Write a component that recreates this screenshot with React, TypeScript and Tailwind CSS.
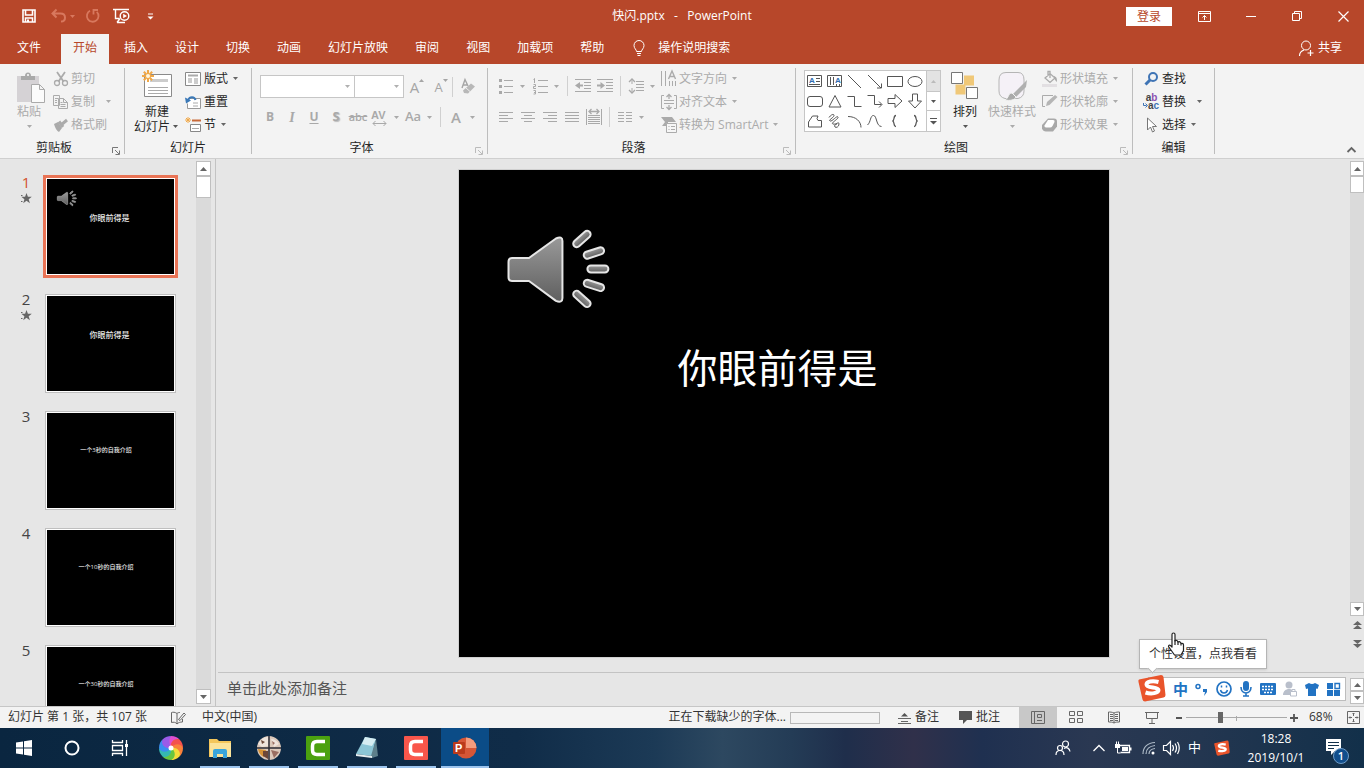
import React from 'react';

type Kids = { children?: React.ReactNode };

function Svg({ w = 16, h = 16, className = '', children }: Kids & { w?: number; h?: number; className?: string }) {
  return (
    <svg
      width={w}
      height={h}
      viewBox={`0 0 ${w} ${h}`}
      fill="none"
      stroke="currentColor"
      className={`shrink-0 overflow-visible ${className}`}
      aria-hidden="true"
    >
      {children}
    </svg>
  );
}

function Caret({ className = '' }: { className?: string }) {
  return (
    <span className={`flex w-[10px] shrink-0 items-center justify-center ${className}`}>
      <svg width="5" height="3" viewBox="0 0 5 3" fill="currentColor" aria-hidden="true">
        <path d="M0 0h5L2.5 3z" />
      </svg>
    </span>
  );
}

function Sep() {
  return <span className="mx-[4px] h-[20px] w-px shrink-0 bg-[#d0d0d0]" />;
}

function Divider() {
  return <div className="my-1 w-px shrink-0 bg-[#bdbdbd]" />;
}

function Group({ label, launcher, launcherDim, width, children }: Kids & { label: string; launcher?: boolean; launcherDim?: boolean; width: string }) {
  return (
    <section className={`flex shrink-0 flex-col justify-between ${width}`} aria-label={label}>
      <div className="flex h-[72px] items-start">{children}</div>
      <div className="flex h-[21px] items-start">
        <span className="flex-1 text-center leading-[22px] text-[#262626]">{label}</span>
        {launcher && (
          <button className={`flex h-[21px] w-4 items-center justify-center pt-[7px] ${launcherDim ? 'text-[#bbb]' : 'text-[#777]'}`} aria-label={`${label}设置`}>
            <Svg w={8} h={8}>
              <path d="M.5 6V.5H6M3 3l4 4M7.500 3.500v4h-4" />
            </Svg>
          </button>
        )}
      </div>
    </section>
  );
}

function Tool({ label, caret, children }: Kids & { label: string; caret?: boolean }) {
  return (
    <button className="flex h-[22px] shrink-0 items-center text-[#a9a9a9]" aria-label={label}>
      <span className="flex w-[22px] items-center justify-center">{children}</span>
      {caret && <Caret />}
    </button>
  );
}

function Row({ icon, text, caret, off, gap }: { icon: React.ReactNode; text: string; caret?: boolean; off?: boolean; gap?: boolean }) {
  return (
    <button className={`flex h-[23px] items-center gap-[2px] whitespace-nowrap ${off ? 'text-[#ababab]' : 'text-[#262626]'}`}>
      {icon}
      <span>{text}</span>
      {caret && <Caret className={`${gap ? 'ml-[6px]' : ''} ${off ? '' : 'text-[#666]'}`} />}
    </button>
  );
}

/* ---------- title bar ---------- */

function TitleBar() {
  return (
    <header className="grid h-8 shrink-0 grid-cols-[1fr_auto_1fr] items-center bg-[#b7472a] text-white">
      <div className="flex items-center pl-[21px]">
        <button aria-label="保存">
          <Svg>
            <path d="M2 2h12v12H2zM4.500 2v5h7V2" strokeWidth="1.600" />
            <path d="M4.500 14v-4h7v4" strokeWidth="1.500" />
            <path d="M6 11.500h2V14H6z" fill="currentColor" stroke="none" />
          </Svg>
        </button>
        <button className="ml-[14px] flex items-center text-[#d8785e]" aria-label="撤消">
          <Svg>
            <path d="M5.500 1.500L1.500 5.500l4 4M2 5.500h7.500c2.800 0 4.500 1.800 4.500 4.200 0 2.300-1.700 3.800-4 3.800" strokeWidth="2" />
          </Svg>
          <Caret />
        </button>
        <button className="ml-[8px] text-[#d8785e]" aria-label="重复">
          <Svg>
            <path d="M5 2.800A5.800 5.800 0 1 0 11.800 3.800" strokeWidth="1.800" />
            <path d="M8.500 6.500V2H13" strokeWidth="1.800" />
          </Svg>
        </button>
        <button className="ml-[12px]" aria-label="从头开始">
          <Svg w={18}>
            <path d="M0 1.500h16M2.500 2v8.500h4M7 10.500l-3 4M4 14.500h8" strokeWidth="1.400" />
            <circle cx="11.500" cy="8" r="4.300" strokeWidth="1.400" />
            <path d="M10.200 5.700v4.600L14 8z" fill="currentColor" stroke="none" />
          </Svg>
        </button>
        <button className="ml-[16px]" aria-label="自定义快速访问工具栏">
          <Svg w={7} h={7}>
            <path d="M1 1h5" />
            <path d="M.5 3.500h6L3.500 6.500z" fill="currentColor" stroke="none" />
          </Svg>
        </button>
      </div>
      <h1 className="whitespace-pre pb-px text-[12px]">快闪.pptx&nbsp;&nbsp; -&nbsp;&nbsp; PowerPoint</h1>
      <div className="flex items-center justify-end pr-[15px]">
        <button className="h-[19px] w-[46px] bg-white text-[12px] leading-[19px] text-[#b7472a]">登录</button>
        <button className="ml-[26px]" aria-label="功能区显示选项">
          <Svg w={13} h={11}>
            <path d="M.5.5h12v10H.5zM.5 2.500h12M6.500 9V4.500M4.500 6.500l2-2 2 2" />
          </Svg>
        </button>
        <button className="ml-[35px]" aria-label="最小化">
          <Svg w={10} h={11}><path d="M0 5.500h10" /></Svg>
        </button>
        <button className="ml-[36px]" aria-label="还原">
          <Svg w={10} h={10}><path d="M.5 2.500h7v7h-7zM2.500 2.500v-2h7v7h-2" /></Svg>
        </button>
        <button className="ml-[36px]" aria-label="关闭">
          <Svg w={11} h={11}><path d="M.5.5l10 10M10.500.5l-10 10" strokeWidth="1.200" /></Svg>
        </button>
      </div>
    </header>
  );
}

const tabs = ['插入', '设计', '切换', '动画', '幻灯片放映', '审阅', '视图', '加载项', '帮助'];

function TabBar() {
  return (
    <nav className="flex h-8 shrink-0 items-end bg-[#b7472a] pl-[5px] text-[12px] text-white">
      <button className="h-[30px] px-3 pb-[2px]">文件</button>
      <button className="ml-[8px] mr-[3px] h-[30px] bg-[#f3f3f3] px-3 pb-[2px] text-[#b7472a]">开始</button>
      <div className="flex gap-[3px]">
        {tabs.map((t) => (
          <button key={t} className="h-[30px] px-3 pb-[2px]">{t}</button>
        ))}
      </div>
      <button className="ml-[16px] flex h-[30px] items-center gap-[12px] pb-[2px]">
        <Svg w={14} h={16}>
          <path d="M4.500 11.500c0-2-2.500-3-2.500-6a5 5 0 0 1 10 0c0 3-2.500 4-2.500 6zM5 13.500h4M5.500 15.500h3" />
        </Svg>
        操作说明搜索
      </button>
      <button className="ml-auto mr-[22px] flex h-[30px] items-center gap-[4px] pb-[2px]">
        <Svg w={16} h={17}>
          <circle cx="8" cy="5.500" r="4.500" />
          <path d="M1.500 16c0-3 1.700-5 4.500-6M12.500 10v6M9.500 13h6" strokeWidth="1.200" />
        </Svg>
        共享
      </button>
    </nav>
  );
}

/* ---------- ribbon ---------- */

function ClipboardGroup() {
  return (
    <Group label="剪贴板" launcher width="w-[124px]">
      <button className="ml-[14px] flex w-[34px] flex-col items-center pt-[8px] text-[#ababab]">
        <Svg w={30} h={31}>
          <path d="M1 4h22v26H1z" fill="#d5d2d5" stroke="none" />
          <path d="M5 8V4h4c0-2 1-3.500 3-3.500S15 2 15 4h4v4z" fill="#a9a9a9" stroke="none" />
          <path d="M15.500 12.500h8l5 5v13h-13zM23.500 12.500v5h5" fill="#fbfbfb" stroke="#aaa" />
          <path d="M11.500 2.500h1v1h-1z" stroke="#fff" />
        </Svg>
        <span className="-ml-[4px] leading-[17px]">粘贴</span>
        <Caret className="-ml-[3px] h-[12px]" />
      </button>
      <div className="ml-[5px] pt-[3px]">
        <Row off text="剪切" icon={
          <Svg><path d="M4 1l6.500 9.500M12 1L5.500 10.500" strokeWidth="1.800" /><circle cx="4" cy="12" r="2.500" strokeWidth="1.300" /><circle cx="12" cy="12" r="2.500" strokeWidth="1.300" /></Svg>
        } />
        <Row off text="复制" caret gap icon={
          <Svg><path d="M.5 1.500h6v10h-6zM5.500 4.500h5l4 4v6h-9zM10.500 4.500v4h4" fill="#f3f3f3" /><path d="M2 4.500h3M2 6.500h2M2 8.500h2M7.500 8.500h2M7.500 10.500h5M7.500 12.500h5" /></Svg>
        } />
        <Row off text="格式刷" icon={
          <Svg><path d="M1 7l4-2 4 6-3 4c-2-1-4-4-5-8z" fill="#aaa" stroke="none" /><path d="M6 4.500l4 5.500M8 8l6-5" strokeWidth="3" /></Svg>
        } />
      </div>
    </Group>
  );
}

function SlidesGroup() {
  return (
    <Group label="幻灯片" width="w-[126px]">
      <button className="ml-[7px] flex w-[50px] flex-col items-center pt-[6px] text-[#262626]">
        <Svg w={32} h={30}>
          <path d="M3.500 4.500h27v22h-27z" fill="#fff" stroke="#8a8a8a" />
          <path d="M9 10.500h18" stroke="#ccc" strokeWidth="3" />
          <path d="M7 17.500h20M7 20.500h20M7 23.500h20" stroke="#aaa" />
          <path d="M7 0v12M1 6h12M2.800 1.800l8.400 8.400M11.200 1.800l-8.400 8.400" stroke="#f0a848" strokeWidth="2" />
          <circle cx="7" cy="6" r="2" fill="#fff7df" stroke="none" />
        </Svg>
        <span className="mt-[4px] leading-[15px]">新建</span>
        <span className="flex w-full items-center whitespace-nowrap pl-[2px] leading-[15px]">幻灯片<Caret className="text-[#555]" /></span>
      </button>
      <div className="ml-[3px] pt-[3px]">
        <Row text="版式" caret icon={
          <Svg w={17}><path d="M.5 1.500h15v13H.5z" fill="#fff" stroke="#888" /><path d="M3 4.500h10" stroke="#aaa" strokeWidth="2" /><path d="M3 7h4v5H3z" fill="#ccc" stroke="none" /><path d="M9 8h4M9 10h4M9 12h4" stroke="#999" /></Svg>
        } />
        <Row text="重置" icon={
          <Svg w={17}><path d="M4.500 4.500h11v10h-13v-5" fill="#fff" stroke="#999" /><path d="M8 9h5M8 12h5" stroke="#aaa" /><path d="M10.500 6C9.500 2.500 5 2 3 6" stroke="#3b79b7" strokeWidth="2" /><path d="M0 3.500l1 6 5-3z" fill="#3b79b7" stroke="none" /></Svg>
        } />
        <Row text="节" caret icon={
          <Svg w={17}><path d="M3 0v6M0 3h6M1 1l4 4M5 1L1 5" stroke="#f0a848" /><path d="M7 3.500h9" stroke="#c86a3a" strokeWidth="2" /><path d="M5.500 7.500h10v7h-10z" fill="#fff" stroke="#888" /><path d="M7 11.500h7" stroke="#aaa" /></Svg>
        } />
      </div>
    </Group>
  );
}

function Combo({ label, width }: { label: string; width: string }) {
  return (
    <div className={`relative h-[23px] ${width}`}>
      <select aria-label={label} defaultValue="" className="h-full w-full appearance-none border border-[#c6c6c6] bg-white">
        <option value="" />
      </select>
      <Caret className="pointer-events-none absolute right-[3px] top-[10px] text-[#b0b0b0]" />
    </div>
  );
}

function FontGroup() {
  return (
    <Group label="字体" launcher launcherDim width="w-[235px]">
      <div className="flex flex-col gap-[8px] pl-[7px] pt-[11px] text-[#a5a5a5]">
        <div className="flex items-center">
          <div className="flex pl-px">
            <Combo label="字体" width="w-[95px]" />
            <div className="-ml-px"><Combo label="字号" width="w-[50px]" /></div>
          </div>
          <button aria-label="增大字号" className="flex w-[26px] justify-center text-[15px] leading-[22px]">
            <span>A</span><Svg w={5} h={4} className="mt-[3px]"><path d="M0 3l2.500-3L5 3z" fill="currentColor" stroke="none" /></Svg>
          </button>
          <button aria-label="减小字号" className="flex w-[22px] justify-center text-[13px] leading-[22px]">
            <span>A</span><Svg w={5} h={4} className="mt-[3px]"><path d="M0 0h5L2.500 3z" fill="currentColor" stroke="none" /></Svg>
          </button>
          <span className="h-[20px] w-px bg-[#d0d0d0]" />
          <button aria-label="清除所有格式" className="ml-[7px]">
            <Svg w={18}>
              <path d="M2 9L5 .5 8 7M3 6h4" strokeWidth="1.400" />
              <path d="M3 11.500l8-7 4 3-7 7-4-.5z" fill="#b8b8b8" stroke="none" />
              <path d="M6 9l4 3.500" stroke="#eee" />
            </Svg>
          </button>
        </div>
        <div className="flex items-center">
          <Tool label="加粗"><b className="text-[12px]">B</b></Tool>
          <Tool label="倾斜"><i className="font-['Liberation_Serif',serif] text-[14px] font-bold">I</i></Tool>
          <Tool label="下划线"><b className="text-[12px] underline underline-offset-2">U</b></Tool>
          <Tool label="文字阴影"><b className="text-[13px] [text-shadow:1px_1px_1px_#bbb]">S</b></Tool>
          <Tool label="删除线"><span className="text-[11px] font-semibold line-through">abc</span></Tool>
          <Tool label="字符间距" caret>
            <Svg w={18} h={18}>
              <text x="0" y="11" fontSize="11" fill="currentColor" stroke="none" className="font-['Liberation_Sans',sans-serif] font-bold">AV</text>
              <path d="M2 15.500h13M4.500 13L2 15.500 4.500 18M12.500 13l2.500 2.500-2.500 2.500" />
            </Svg>
          </Tool>
          <span className="ml-px"><Tool label="更改大小写" caret><span className="text-[13px] font-semibold">Aa</span></Tool></span>
          <span className="ml-[6px] mr-[4px] h-[20px] w-px bg-[#d0d0d0]" />
          <Tool label="字体颜色" caret><span className="text-[15px] font-semibold">A</span></Tool>
        </div>
      </div>
    </Group>
  );
}

function ParagraphGroup() {
  return (
    <Group label="段落" launcher launcherDim width="w-[307px]">
      <div className="flex flex-col gap-[9px] pl-[7px] pt-[11px]">
        <div className="flex items-center">
          <Tool label="项目符号" caret>
            <Svg w={14}><path d="M5 2.500h9M5 8.500h9M5 14.500h9" /><path d="M0 1h3v3H0zM0 7h3v3H0zM0 13h3v3H0z" fill="currentColor" stroke="none" /></Svg>
          </Tool>
          <span className="ml-[2px]">
            <Tool label="编号" caret>
              <Svg w={15}>
                <path d="M5 2.500h10M5 8.500h10M5 14.500h10" />
                <path d="M.5 1.500l1-1V5M.5 6.500h2v2h-2v2h2.500M.5 12.500h2v3.500h-2M1 14.500h1.500" />
              </Svg>
            </Tool>
          </span>
          <span className="ml-[6px] mr-[4px] h-[20px] w-px bg-[#d0d0d0]" />
          <Tool label="减少缩进"><Svg><path d="M0 1.500h16M9 4.500h7M9 7.500h7M9 10.500h7M0 13.500h16" /><path d="M2 7.500h6" strokeWidth="2" /><path d="M0 7.500L5 4v7z" fill="currentColor" stroke="none" /></Svg></Tool>
          <Tool label="增加缩进"><Svg><path d="M0 1.500h16M9 4.500h7M9 7.500h7M9 10.500h7M0 13.500h16" /><path d="M0 7.500h6" strokeWidth="2" /><path d="M8 7.500L3.500 4v7z" fill="currentColor" stroke="none" /></Svg></Tool>
          <Sep />
          <Tool label="行距" caret>
            <Svg w={15}><path d="M7 3.500h8M7 6.500h8M7 9.500h8M7 12.500h8M3 1v5M3 10v5" /><path d="M0 4L3 1l3 3M0 12l3 3 3-3" strokeWidth="1.300" /></Svg>
          </Tool>
        </div>
        <div className="flex items-center">
          <Tool label="左对齐"><Svg w={14} h={12}><path d="M0 1.500h14M0 4.500h9M0 7.500h14M0 10.500h9" /></Svg></Tool>
          <Tool label="居中"><Svg w={14} h={12}><path d="M0 1.500h14M3 4.500h8M0 7.500h14M3 10.500h8" /></Svg></Tool>
          <Tool label="右对齐"><Svg w={14} h={12}><path d="M0 1.500h14M5 4.500h9M0 7.500h14M5 10.500h9" /></Svg></Tool>
          <Tool label="两端对齐"><Svg w={14} h={12}><path d="M0 1.500h14M0 4.500h14M0 7.500h14M0 10.500h14" /></Svg></Tool>
          <Tool label="分散对齐"><Svg><path d="M.5 0v16M15.500 0v16M2 6.500h12M2 8.500h12M2 10.500h12M2 12.500h12M2 14.500h12" /><path d="M3 2.500h10M5.500 0L3 2.500 5.500 5M10.500 0L13 2.500 10.500 5" strokeWidth="1.300" /></Svg></Tool>
          <Sep />
          <Tool label="分栏" caret><Svg w={14} h={12}><path d="M0 1.500h6M8 1.500h6M0 4.500h6M8 4.500h6M0 7.500h6M8 7.500h6M0 10.500h6M8 10.500h6" /></Svg></Tool>
        </div>
      </div>
      <div className="ml-[4px] pt-[3px]">
        <Row off caret text="文字方向" icon={
          <Svg><path d="M.5 0v15M4.500 0v15M8.500 10v5M11.500 10v5M14.500 10v5" /><path d="M7.500 8L11 0l3.500 8M9 5.500h4.500" strokeWidth="1.400" /></Svg>
        } />
        <Row off caret text="对齐文本" icon={
          <Svg><path d="M3 1.500H.5v13H3M13 1.500h2.500v13H13M3 6.500h10M3 9.500h10" /><path d="M8 1v4M8 11v4M5.500 3L8 .5 10.500 3M5.500 13L8 15.500l2.500-2.500" strokeWidth="1.300" /></Svg>
        } />
        <Row off caret text="转换为 SmartArt" icon={
          <Svg><path d="M0 0h11l4 5H7v4H1l3-4z" fill="#aaa" stroke="none" /><path d="M5.500 6.500h10v9h-10z" fill="#f6f6f6" /><path d="M7.500 9.500h1M10 9.500h4M7.500 12.500h1M10 12.500h4" /></Svg>
        } />
      </div>
    </Group>
  );
}

const shapes: { name: string; draw: React.ReactNode }[] = [
  { name: '文本框', draw: <><path d="M.5 2.500h14v11H.5z" /><text x="2" y="10" fontSize="8" fill="#2f6db0" stroke="none" className="font-['Liberation_Sans',sans-serif] font-bold">A</text><path d="M9 5.500h4M9 8.500h4M2 11.500h11" /></> },
  { name: '竖排文本框', draw: <><path d="M.5 2.500h14v11H.5zM3.500 4v8M6.500 4v8" /><text x="8" y="10" fontSize="8" fill="#2f6db0" stroke="none" className="font-['Liberation_Sans',sans-serif] font-bold">A</text><path d="M9.500 11v2M12.500 11v2" /></> },
  { name: '直线', draw: <path d="M1 2l13 13" /> },
  { name: '箭头', draw: <path d="M1 2l13 13M14.500 10.500v4.500H10" /> },
  { name: '矩形', draw: <path d="M.5 3.500h15v10H.5z" /> },
  { name: '椭圆', draw: <ellipse cx="8" cy="8.500" rx="7" ry="5" /> },
  { name: '圆角矩形', draw: <rect x=".5" y="3.500" width="15" height="10" rx="2.500" /> },
  { name: '三角形', draw: <path d="M8 2.500L14 14H2z" /> },
  { name: '肘形连接符', draw: <path d="M.5 3.500h7v10h7" /> },
  { name: '肘形箭头', draw: <path d="M.5 2.500h7v9h7M12 8.500l3 3-3 3" /> },
  { name: '右箭头', draw: <path d="M1 5.500h7v-4l7 6.500-7 6.500v-4H1z" /> },
  { name: '下箭头', draw: <path d="M5.500 1v7H1.500L8 15l6.500-7h-4V1z" /> },
  { name: '任意多边形', draw: <path d="M1.500 14V9l4-6H11q-2 3 0 4.500h3.500V14z" strokeLinejoin="round" /> },
  { name: '自由曲线', draw: <path d="M2 4.500c2-3 5-4 5-2S1 7 3 8s7-6 8-4-8 6-5 7 6-3 6 0-3 4-4 3 0-3 2-3" /> },
  { name: '弧形', draw: <path d="M1 3.500c8 0 13 5 13 11" /> },
  { name: '曲线', draw: <path d="M.5 12C4 9 3 2.500 6.500 2.500S9 13.500 14.500 13.500" /> },
  { name: '左大括号', draw: <path d="M9 2.500c-3 0-1 5-3.500 5.500 2.500.5.5 5.500 3.500 5.500" strokeWidth="1.300" /> },
  { name: '右大括号', draw: <path d="M7 2.500c3 0 1 5 3.500 5.500-2.500.5-.5 5.500-3.500 5.500" strokeWidth="1.300" /> },
];

function DrawingGroup() {
  return (
    <Group label="绘图" launcher launcherDim width="w-[336px]">
      <div className="ml-[8px] mt-[6px] flex shrink-0 border border-[#c6c6c6] bg-white text-[#555]">
        <div className="mr-px grid grid-cols-6">
          {shapes.map((s) => (
            <button key={s.name} aria-label={s.name} className="flex h-5 w-5 items-center justify-center"><Svg>{s.draw}</Svg></button>
          ))}
        </div>
        <div className="flex w-[14px] flex-col border-l border-[#c6c6c6]">
          <button aria-label="上一行" className="flex h-5 items-center justify-center bg-[#e3e3e3] text-[#bbb]"><Svg w={5} h={3}><path d="M0 3h5L2.500 0z" fill="currentColor" stroke="none" /></Svg></button>
          <button aria-label="下一行" className="flex h-5 items-center justify-center border-y border-[#c6c6c6]"><Caret /></button>
          <button aria-label="其他形状" className="flex h-5 items-center justify-center"><Svg w={7} h={7}><path d="M0 .5h7" /><path d="M0 3h7L3.500 6.500z" fill="currentColor" stroke="none" /></Svg></button>
        </div>
      </div>
      <button className="ml-[5px] flex w-[38px] flex-col items-center pt-[7px] text-[#262626]">
        <Svg w={28} h={29}>
          <path d="M13 4.500h10v10H13zM4.500 13.500h10v10h-10z" fill="#f0c878" stroke="none" />
          <path d="M.5 1.500h11v11H.5zM15.500 16.500h11v11h-11z" fill="#fff" stroke="#777" />
        </Svg>
        <span className="mt-[3px] leading-[17px]">排列</span>
        <Caret className="h-[12px] text-[#555]" />
      </button>
      <button className="ml-[2px] flex w-[52px] flex-col items-center whitespace-nowrap pt-[7px] text-[#ababab]">
        <Svg w={30} h={31}>
          <path d="M8 27.500Q2 26 2 20V9q0-7.500 7-7.500h12q6 0 6 7.500v11q0 6-6 7.500z" fill="#f5f1f7" stroke="#b5b5b5" />
          <path d="M30 9l-1 7-10 10-3-3z" fill="#b0b0b0" stroke="none" />
          <path d="M15 22c-4 0-3 5-7 7 5 1 10 0 11-3z" fill="#aaa" stroke="#f3f3f3" />
        </Svg>
        <span className="mt-px leading-[17px]">快速样式</span>
        <Caret className="h-[12px]" />
      </button>
      <div className="ml-[4px] pt-[3px]">
        <Row off caret text="形状填充" icon={
          <Svg><path d="M3 7l5-4.500L13 7l-5 4.500zM6 5V.5h2V7" strokeWidth="1.300" /><path d="M12 5c3 1 3 3 3 6-2-1-2-3-3-4z" fill="#aaa" stroke="none" /><path d="M0 13h15v3H0z" fill="#e2dfe2" stroke="none" /></Svg>
        } />
        <Row off caret text="形状轮廓" icon={
          <Svg><path d="M11 1.500H.5v11H3" /><path d="M4 12l1-4 8-7 2.500 2-8 8z" fill="#b5b5b5" stroke="none" /></Svg>
        } />
        <Row off caret text="形状效果" icon={
          <Svg><path d="M6 1.500h6q3 0 3 3v5l-4 5H4q-3 0-4-3V8z" fill="#a9a9a9" stroke="none" /><path d="M6 3h5q2 0 1.500 2L10.500 9q-1 1.500-2.500 1.500H4Q2 10.500 2.500 8.500z" fill="#fff" stroke="none" /></Svg>
        } />
      </div>
    </Group>
  );
}

function EditGroup() {
  return (
    <Group label="编辑" width="w-[81px]">
      <div className="pl-[10px] pt-[3px]">
        <Row text="查找" icon={<Svg w={17}><circle cx="10" cy="6" r="4" stroke="#3f74b5" strokeWidth="2" /><path d="M7 9l-4.500 4.500" stroke="#3f74b5" strokeWidth="3" /></Svg>} />
        <Row text="替换" caret gap icon={
          <span className="flex w-[17px] flex-col font-['Liberation_Sans',sans-serif] text-[10px] font-bold leading-[8px] text-[#444]">
            <span>a<span className="text-[#8b4fb0]">b</span></span>
            <span className="flex items-center"><Svg w={5} h={5}><path d="M.5 0v2.500h3M2.500.5l2 2-2 2" stroke="#3f74b5" /></Svg>a<span className="text-[#3f74b5]">c</span></span>
          </span>
        } />
        <Row text="选择" caret icon={<Svg w={17}><path d="M4.500 1v12l3-3 2 5 2-1-2-4.500h4z" fill="#fff" stroke="#777" /></Svg>} />
      </div>
    </Group>
  );
}

function Ribbon() {
  return (
    <div className="flex h-[95px] shrink-0 border-b border-[#cfcfcf] bg-[#f3f3f3] text-[12px]">
      <ClipboardGroup /><Divider />
      <SlidesGroup /><Divider />
      <FontGroup /><Divider />
      <ParagraphGroup /><Divider />
      <DrawingGroup /><Divider />
      <EditGroup /><Divider />
      <button aria-label="折叠功能区" className="ml-auto mr-[8px] self-end pb-[5px] text-[#666]">
        <Svg w={9} h={6}><path d="M.5 5l4-4 4 4" strokeWidth="1.800" /></Svg>
      </button>
    </div>
  );
}

/* ---------- slides ---------- */

function Speaker({ className }: { className: string }) {
  return (
    <svg viewBox="0 0 104 78" className={`overflow-visible ${className}`} fill="url(#spk)" stroke="#e6e6e6" strokeWidth="2" strokeLinejoin="round" aria-label="音频" role="img">
      <defs>
        <linearGradient id="spk" x1="0" y1="0" x2="0" y2="1">
          <stop offset="0" stopColor="#999" />
          <stop offset="1" stopColor="#5f5f5f" />
        </linearGradient>
      </defs>
      <path d="M5 27h17L49 7.500Q55.500 4.500 55.500 10v57q0 5.500-6.500 3L22 50H5q-3.500 0-3.500-4V31q0-4 3.500-4z" />
      {[[75, 8, -42], [87, 22, -18], [91, 38, 0], [87, 54.500, 18], [75, 68, 42]].map(([x, y, r]) => (
        <rect key={y} x={x - 10.500} y={y - 3.500} width="21" height="7" rx="3.500" transform={`rotate(${r} ${x} ${y})`} />
      ))}
    </svg>
  );
}

const slides = [
  { n: 1, text: '你眼前得是', star: true },
  { n: 2, text: '你眼前得是', star: true },
  { n: 3, text: '一个3秒的自我介绍' },
  { n: 4, text: '一个10秒的自我介绍' },
  { n: 5, text: '一个30秒的自我介绍' },
];

function ArrowBtn({ up, label, cls }: { up?: boolean; label: string; cls: string }) {
  return (
    <button aria-label={label} className={`flex shrink-0 items-center justify-center border border-[#bfbfbf] bg-white text-[#666] ${cls}`}>
      <Svg w={7} h={4}><path d={up ? 'M0 4h7L3.500 0z' : 'M0 0h7L3.500 4z'} fill="currentColor" stroke="none" /></Svg>
    </button>
  );
}

function SlidePanel() {
  return (
    <aside className="flex w-[216px] shrink-0 border-r border-[#c3c3c3]">
      <ol className="min-w-0 flex-1 overflow-hidden pt-[19px]">
        {slides.map((s) => (
          <li key={s.n} className="flex h-[117px] items-start">
            <div className={`-mt-[4px] flex w-[46px] shrink-0 flex-col items-center pl-[6px] text-[15px] leading-[16px] ${s.n === 1 ? 'text-[#d35230]' : 'text-[#444]'}`}>
              <span>{s.n}</span>
              {s.star && (
                <Svg w={12} h={11} className="mt-[3px] text-[#666]">
                  <path d="M6.500 0l1.400 3.800h3.900L8.700 6.200l1.200 4-3.400-2.400-3.300 2.400 1.200-4L1.300 3.800h3.800z" fill="currentColor" stroke="none" />
                  <path d="M1 2.500h1.500M1 8.500h1.500" />
                </Svg>
              )}
            </div>
            <button
              aria-label={`幻灯片 ${s.n}`}
              className={`relative flex h-[97px] w-[129px] shrink-0 justify-center border border-white bg-black text-[#e8e8e8] ${s.n === 1 ? 'ring-3 ring-[#e97456]' : 'ring-1 ring-[#bfbfbf]'}`}
            >
              {s.n === 1 && <Speaker className="absolute left-[10px] top-[12px] w-5" />}
              <span className={s.star ? 'mr-[2px] mt-[34px] text-[8px] font-medium leading-[10px]' : 'mr-[9px] mt-[33px] text-[6px] font-medium leading-[8px]'}>{s.text}</span>
            </button>
          </li>
        ))}
      </ol>
      <div className="mb-[2px] mr-[4px] mt-[2px] flex w-[15px] flex-col bg-[#dadada]">
        <ArrowBtn up label="向上滚动" cls="h-[15px]" />
        <div className="h-[22px] border border-[#bfbfbf] bg-white" />
        <div className="flex-1" />
        <ArrowBtn label="向下滚动" cls="h-[15px]" />
      </div>
    </aside>
  );
}

function DoubleArrow({ up, label }: { up?: boolean; label: string }) {
  return (
    <button aria-label={label} className="flex h-[18px] items-center justify-center text-[#666]">
      <Svg w={9} h={9}>
        <path d={up ? 'M0 4h9L4.500 0zM0 8h9L4.500 4z' : 'M0 1h9L4.500 5zM0 5h9L4.500 9z'} fill="currentColor" stroke="none" />
      </Svg>
    </button>
  );
}

function Editor() {
  return (
    <div className="flex min-w-0 flex-1 flex-col">
      <div className="flex min-h-0 flex-1">
        <div className="flex min-w-0 flex-1 justify-center pb-[15px] pl-[2px] pt-[11px]">
          <div className="relative aspect-[4/3] h-full bg-black ring-1 ring-[#d0d0d0]">
            <Speaker className="absolute left-[7.400%] top-[12.500%] w-[16%]" />
            <p className="absolute inset-x-0 top-[35%] mr-[13px] text-center text-[40px] leading-[56px] text-white">你眼前得是</p>
          </div>
        </div>
        <div className="mt-[2px] flex w-[14px] shrink-0 flex-col">
          <ArrowBtn up label="上滚" cls="h-[15px]" />
          <div className="h-[17px] border border-[#bfbfbf] bg-white" />
          <div className="flex-1 bg-[#dadada]" />
          <ArrowBtn label="下滚" cls="h-[14px]" />
          <DoubleArrow up label="上一张幻灯片" />
          <DoubleArrow label="下一张幻灯片" />
          <div className="h-[20px]" />
        </div>
      </div>
      <div className="ml-[2px] flex h-[34px] shrink-0 border-t border-[#c3c3c3]">
        <textarea aria-label="备注" rows={1} placeholder="单击此处添加备注" className="h-full min-w-0 flex-1 resize-none overflow-hidden bg-transparent pl-[9px] pt-[3px] text-[15px] leading-[24px] placeholder:text-[#555]" />
        <div className="flex w-[14px] flex-col pt-[5px]">
          <ArrowBtn up label="备注上滚" cls="h-[13px]" />
          <ArrowBtn label="备注下滚" cls="h-[13px]" />
        </div>
      </div>
    </div>
  );
}

/* ---------- input method bar ---------- */

function SogouLogo({ className }: { className: string }) {
  return (
    <svg viewBox="0 0 28 28" className={className} aria-hidden="true">
      <path d="M1 5.500L23 1q2 0 2.500 2l2 18q0 2-2 2.500L7 27.500q-2 0-2.500-2L.5 8q-.5-2 .5-2.500z" fill="#e9542b" />
      <path d="M20.500 8c-6-1.500-12-.5-12 2.500 0 4 12 2 12 5.500 0 3-7 4.500-13 2.500" fill="none" stroke="#fff" strokeWidth="4" />
    </svg>
  );
}

function ImeBar() {
  return (
    <div className="absolute bottom-[67px] right-[18px] flex w-[207px] flex-col text-[12px]">
      <div className="relative mb-[8px] h-[30px] w-[128px] border border-[#b5b5b5] bg-white pl-[9px] leading-[28px] text-[#333] shadow-sm">
        个性设置，点我看看
        <span className="absolute -bottom-[4px] left-[9px] h-[7px] w-[7px] rotate-45 border-b border-r border-[#b5b5b5] bg-white" />
        <svg className="absolute -top-[8px] left-[27px] h-[26px] w-[18px]" viewBox="0 0 18 26" fill="#fff" stroke="#222" strokeWidth="1.200" strokeLinejoin="round" aria-hidden="true">
          <path d="M5 15V2.500q0-1.500 1.500-1.500T8 2.500V9q.5-1 2-.500l1 1.500q1.500-1 2.500.5l.5 1q2.500-.5 2.500 1.500v5.500L14 23H7.500L1.500 14.500q0-2 2-1z" />
          <path d="M8 8v5M11 10v3M14 11.500v2" />
        </svg>
      </div>
      <div className="relative ml-[9px] flex h-[24px] items-center justify-end gap-[6px] border border-[#bdbdbd] bg-white pr-[4px] text-[#2273c3]">
        <SogouLogo className="absolute -left-[11px] -top-[4px] h-[28px] w-[28px]" />
        <button className="text-[15px] font-bold leading-[22px]">中</button>
        <button aria-label="中文标点"><Svg><circle cx="4" cy="5.500" r="2" strokeWidth="1.500" /><path d="M9 8h4v3l-3 4 1-4H9z" fill="currentColor" stroke="none" /></Svg></button>
        <button aria-label="表情"><Svg><circle cx="8" cy="8" r="7" strokeWidth="1.700" /><path d="M4.500 9c1 4 6 4 7 0M5.500 4.500v2M10.500 4.500v2" strokeWidth="1.500" /></Svg></button>
        <button aria-label="语音"><Svg><rect x="5" y="0" width="6" height="10" rx="3" fill="currentColor" stroke="none" /><path d="M3 6c0 8 10 8 10 0M8 12v3M5 15h6" strokeWidth="1.600" /></Svg></button>
        <button aria-label="软键盘"><Svg><rect x="0" y="2" width="16" height="12" rx="1" fill="currentColor" stroke="none" /><path d="M2 5.500h12M2 8.500h12M4 11.500h8" stroke="#fff" strokeDasharray="2 1" strokeWidth="1.500" /></Svg></button>
        <button aria-label="用户" className="text-[#b9bfcb]"><Svg><circle cx="7" cy="4" r="3.500" fill="currentColor" stroke="none" /><path d="M1 14c0-8 12-8 12 0z" fill="currentColor" stroke="none" /><path d="M8.500 10.500h6v4.500h-6zM10 10V8.500h3V10" fill="#fff" /></Svg></button>
        <button aria-label="皮肤"><Svg><path d="M5 2q3 2 6 0l4 2-1.500 4L12 7.500V15H4V7.500L2 8 1 4z" fill="currentColor" stroke="none" /></Svg></button>
        <button aria-label="工具箱"><Svg w={15}><path d="M1 2h6v6H1zM1 9h6v6H1zM8 9h6v6H8z" fill="currentColor" stroke="none" /><path d="M9 2.500h4.500v5H9z" strokeWidth="1.400" /></Svg></button>
      </div>
    </div>
  );
}

/* ---------- status bar ---------- */

function StatusBar() {
  return (
    <footer className="flex h-[22px] shrink-0 items-center whitespace-nowrap border-t border-[#c6c6c6] bg-[#f3f3f3] pl-[8px] pr-[4px] text-[12px] text-[#333]">
      <span className="w-[162px] pb-px">幻灯片 第 1 张，共 107 张</span>
      <button aria-label="拼写检查" className="w-[32px] text-[#666]">
        <Svg><path d="M7 3.500C5 2 3 2 1.500 2.500v10c2-.500 4-.5 5.500 1.500 1.500-1.500 3-2 5.500-2V9M7 3.500V14M7 3.500c1-1 2-1 3-1" /><path d="M8.500 9.500L14 3l1.500 1.500-5.500 6z" /></Svg>
      </button>
      <button className="pb-px">中文(中国)</button>
      <div className="ml-auto flex items-center">
        <span className="pb-px">正在下载缺少的字体...</span>
        <div role="progressbar" aria-label="下载进度" className="ml-[4px] h-[12px] w-[90px] border border-[#b8b8b8]" />
        <button className="ml-[18px] flex items-center gap-[4px]">
          <Svg w={13} h={12}><path d="M0 6.500h13M3 9.500h7M0 11.500h13" stroke="#666" /><path d="M3 4.500L6.500 1 10 4.500z" fill="#555" stroke="none" /></Svg>
          <span className="pb-px">备注</span>
        </button>
        <button className="ml-[20px] flex items-center gap-[3px]">
          <Svg w={14} h={13}><path d="M0 0h13v9H8l-4 4V9H0z" fill="#555" stroke="none" /></Svg>
          <span className="pb-px">批注</span>
        </button>
        <div className="ml-[19px] flex text-[#666]">
          <button aria-label="普通视图" className="flex h-[21px] w-[38px] items-center justify-center bg-[#c8c8c8]"><Svg w={14} h={13}><path d="M.5.5h13v12H.5zM3.500 1v11M6.500 3.500h4v3h-4zM6 9.500h5" /></Svg></button>
          <button aria-label="幻灯片浏览" className="flex h-[21px] w-[38px] items-center justify-center"><Svg w={14} h={13}><path d="M.5.5h5v4h-5zM8.500.5h5v4h-5zM.5 7.500h5v4h-5zM8.500 7.500h5v4h-5z" /></Svg></button>
          <button aria-label="阅读视图" className="flex h-[21px] w-[38px] items-center justify-center"><Svg w={14} h={13}><path d="M7 2C5 1 3 1 1.500 1v10c2 0 4 0 5.500 1 1.500-1 3.500-1 5.500-1V1C11 1 9 1 7 2zM7 2v10M3 3.500h3M3 5.500h3M3 7.500h3M3 9.500h3M8 3.500h3M8 5.500h3M8 7.500h3M8 9.500h3" /></Svg></button>
          <button aria-label="幻灯片放映" className="flex h-[21px] w-[38px] items-center justify-center"><Svg w={14} h={13}><path d="M0 1.500h14M1.500 2v5.500h11V2M7 8v4M4 12.500h6" /></Svg></button>
        </div>
        <button aria-label="缩小" className="ml-[4px] text-[#555]"><Svg w={8} h={8}><path d="M1 4h6" strokeWidth="2" /></Svg></button>
        <div className="relative ml-[3px] flex h-[14px] items-center">
          <span className="absolute left-[50px] top-[5px] h-[5px] w-px bg-[#aaa]" />
          <input
            type="range"
            aria-label="显示比例"
            min={0}
            max={100}
            defaultValue={33}
            className="relative h-[12px] w-[101px] appearance-none bg-[linear-gradient(#a9a9a9,#a9a9a9)] bg-[length:100%_1px] bg-center bg-no-repeat [&::-webkit-slider-thumb]:h-[11px] [&::-webkit-slider-thumb]:w-[5px] [&::-webkit-slider-thumb]:appearance-none [&::-webkit-slider-thumb]:bg-[#666]"
          />
        </div>
        <button aria-label="放大" className="ml-[3px] text-[#555]"><Svg w={8} h={8}><path d="M0 4h8M4 0v8" strokeWidth="1.800" /></Svg></button>
        <span className="ml-[11px] w-[38px] pb-px">68%</span>
        <button aria-label="适应窗口" className="text-[#666]"><Svg w={13} h={13}><path d="M.5.5h12v12H.5z" /><path d="M6.500 2v3M6.500 8v3M2 6.500h3M8 6.500h3M5.500 3l1-1 1 1M5.500 10l1 1 1-1M3 5.500l-1 1 1 1M10 5.500l1 1-1 1" /></Svg></button>
      </div>
    </footer>
  );
}

/* ---------- taskbar ---------- */

const petals = ['#e04fd0', '#f4524d', '#f9813a', '#f4dc3a', '#69c63f', '#35b9b0', '#3a8df0', '#9a5be8'];

const apps: { name: string; icon: React.ReactNode; open: boolean; active?: boolean }[] = [
  {
    name: '浏览器', open: false, icon: (
      <Svg w={24} h={24}>
        {petals.map((c, i) => (
          <path key={c} d="M12 12C7 9 7 2 12 0c4 0 6.500 1.500 8.500 3.500C17 4 14 7 12 12z" fill={c} stroke="none" transform={`rotate(${i * 45} 12 12)`} />
        ))}
        <circle cx="12" cy="12" r="2.500" fill="#fff" stroke="none" />
      </Svg>
    ),
  },
  {
    name: '文件资源管理器', open: true, icon: (
      <Svg w={22} h={20}><path d="M0 1h8l2 2h12v16H0z" fill="#f3c65b" stroke="none" /><path d="M1 5h21v14H1z" fill="#fbe39a" stroke="none" /><path d="M4 20v-7q0-2 2-2h10q2 0 2 2v7h-4v-4H8v4z" fill="#39a5dc" stroke="none" /></Svg>
    ),
  },
  {
    name: '图片', open: true, icon: (
      <Svg w={24} h={24}>
        <circle cx="12" cy="12" r="12" fill="#dcc9bb" stroke="none" />
        <path d="M1 8q5-8 10-7v9l-6 1zM14 3q5 0 8 5l-5 3z" fill="#efe4dc" stroke="none" />
        <path d="M1 13l8 1-2 7q-5-2-6-8z" fill="#d69336" stroke="none" />
        <path d="M6 15h5v8l-5-3zM4 4l4 2-3 2z" fill="#6e4838" stroke="none" />
        <path d="M14 14l8 2-5 6zM15 5l3 2-2 2z" fill="#9a6e62" stroke="none" />
        <path d="M12 0v24M0 12h24" stroke="#2a2a35" strokeWidth="1.500" />
      </Svg>
    ),
  },
  {
    name: 'Camtasia', open: true, icon: (
      <Svg w={24} h={24}><rect width="24" height="24" rx="1" fill="#4ba10f" stroke="none" /><path d="M19 5.500h-8Q6.500 5.500 6.500 10v4q0 4.500 4.500 4.500h8" stroke="#fff" strokeWidth="3.500" /></Svg>
    ),
  },
  {
    name: '记事本', open: true, icon: (
      <Svg w={24} h={24}><path d="M10 1l11 2-4 17-16-2z" fill="#8cc6d6" stroke="none" /><path d="M21 3l2 17-6 2-1-2z" fill="#5d7f8b" stroke="none" /><path d="M1 18l16 2v2L1 20z" fill="#e6eef0" stroke="none" /><path d="M10 1l11 2-4 7-10-2z" fill="#d6edf2" stroke="none" /></Svg>
    ),
  },
  {
    name: 'Camtasia 录制', open: true, icon: (
      <Svg w={24} h={24}><rect width="24" height="24" rx="1" fill="#f9564b" stroke="none" /><path d="M19 5.500h-8Q6.500 5.500 6.500 10v4q0 4.500 4.500 4.500h8" stroke="#fff" strokeWidth="3.500" /></Svg>
    ),
  },
  {
    name: 'PowerPoint', open: true, active: true, icon: (
      <Svg w={24} h={22}>
        <circle cx="13" cy="11" r="10.500" fill="#d65636" stroke="none" /><path d="M13 .5a10.500 10.500 0 0 1 10.500 10.500H13z" fill="#f39b7d" stroke="none" />
        <rect x="0" y="5" width="12" height="12" rx="1" fill="#bb3b1c" stroke="none" />
        <text x="2" y="15" fontSize="11" fill="#fff" stroke="none" className="font-['Liberation_Sans',sans-serif] font-bold">P</text>
      </Svg>
    ),
  },
];

function Taskbar() {
  return (
    <footer className="flex h-10 shrink-0 bg-[linear-gradient(90deg,#0a2640_0%,#102c48_38%,#1c3a56_48%,#2d4860_53%,#243c56_58%,#1f2e4b_62%,#30304a_67%,#1f3050_72%,#2a3852_80%,#233650_88%,#12304a_100%)] text-[12px] text-white">
      <button aria-label="开始" className="flex w-12 items-center justify-center">
        <Svg><path d="M0 2.500l7-1v6H0zM8 1.300L16 0v7.500H8zM0 8.500h7v6l-7-1zM8 8.500h8V16l-8-1.300z" fill="currentColor" stroke="none" /></Svg>
      </button>
      <button aria-label="Cortana" className="flex w-12 items-center justify-center"><Svg><circle cx="8" cy="8" r="6.500" strokeWidth="2" /></Svg></button>
      <button aria-label="任务视图" className="flex w-12 items-center justify-center"><Svg><path d="M.5 0v2.500h10V0M.5 16v-2.500h10V16M.5 5.500h10v5H.5zM14.500 0v16" strokeWidth="1.300" /><path d="M13 4h3v3h-3z" fill="currentColor" stroke="none" /></Svg></button>
      <div className="ml-[3px] flex gap-px">
        {apps.map((a) => (
          <button key={a.name} aria-label={a.name} className={`flex w-12 flex-col items-center justify-end ${a.active ? 'bg-[#0b4c87]' : ''}`}>
            <span className="flex flex-1 items-center pt-[2px]">{a.icon}</span>
            <span className={`h-[2px] ${a.active ? 'w-full' : 'w-10'} ${a.open ? 'bg-[#9cc4ee]' : ''}`} />
          </button>
        ))}
      </div>
      <div className="ml-auto flex items-center pr-[19px]">
        <button aria-label="人脉"><Svg><circle cx="10.500" cy="4" r="3" strokeWidth="1.200" /><circle cx="5" cy="8" r="2.500" strokeWidth="1.200" /><path d="M1 15c0-6 8-6 8 0M9 8.500c3-2 5.500 0 6 3" strokeWidth="1.200" /></Svg></button>
        <button aria-label="显示隐藏的图标" className="ml-[22px]"><Svg w={12} h={8}><path d="M.5 7L6 1.500 11.500 7" strokeWidth="1.300" /></Svg></button>
        <button aria-label="电池" className="ml-[10px]"><Svg w={17}><path d="M4.500 5.500h10v7h-9" strokeWidth="1.300" /><path d="M7 7h6v4H7zM15 7.500h1.500v3H15zM0 4h5v4H0z" fill="currentColor" stroke="none" /><path d="M1.500 1.500V4M3.500 1.500V4M2.500 8v5h3" /></Svg></button>
        <button aria-label="网络" className="ml-[9px]"><Svg><path d="M2 14C2 7 7 3 14 2.500M5 14c0-5 4-8 9-8.500M8 14c0-3 2-5 6-5.500" stroke="#aebbc8" strokeWidth="1.200" /><circle cx="12" cy="13" r="1.500" fill="currentColor" stroke="none" /></Svg></button>
        <button aria-label="音量" className="ml-[6px]"><Svg w={17}><path d="M.5 5.500h3l4-4v13l-4-4h-3zM9.500 5q2 3 0 6M12 3.500q3 4.500 0 9M14.500 2q3.500 6 0 12" strokeWidth="1.200" /></Svg></button>
        <button className="ml-[8px] text-[13px]">中</button>
        <button aria-label="搜狗输入法" className="ml-[13px]"><SogouLogo className="h-4 w-4" /></button>
        <button className="ml-[11px] w-[70px] text-center text-[12px] leading-[19px]">18:28<br />2019/10/1</button>
        <button aria-label="通知" className="relative ml-[14px] flex items-center">
          <Svg w={20} h={20}>
            <path d="M1 1h15v12h-6l-4 4v-4H1z" fill="#fff" stroke="none" /><path d="M3 4.500h11M3 7.500h11M3 10.500h6" stroke="#12304a" />
          </Svg>
          <span className="absolute -bottom-[6px] left-[8px] h-4 w-4 rounded-full border border-[#6f9cc7] bg-[#114e8c] text-center text-[11px] font-semibold leading-[14px]">1</span>
        </button>
      </div>
    </footer>
  );
}

export default function App() {
  return (
    <div className="relative flex h-screen flex-col overflow-hidden bg-[#e6e6e6] font-['Open_Sans','Noto_Sans_CJK_SC',sans-serif]" lang="zh-CN">
      <TitleBar />
      <TabBar />
      <Ribbon />
      <main className="flex min-h-0 flex-1">
        <SlidePanel />
        <Editor />
      </main>
      <StatusBar />
      <Taskbar />
      <ImeBar />
    </div>
  );
}
